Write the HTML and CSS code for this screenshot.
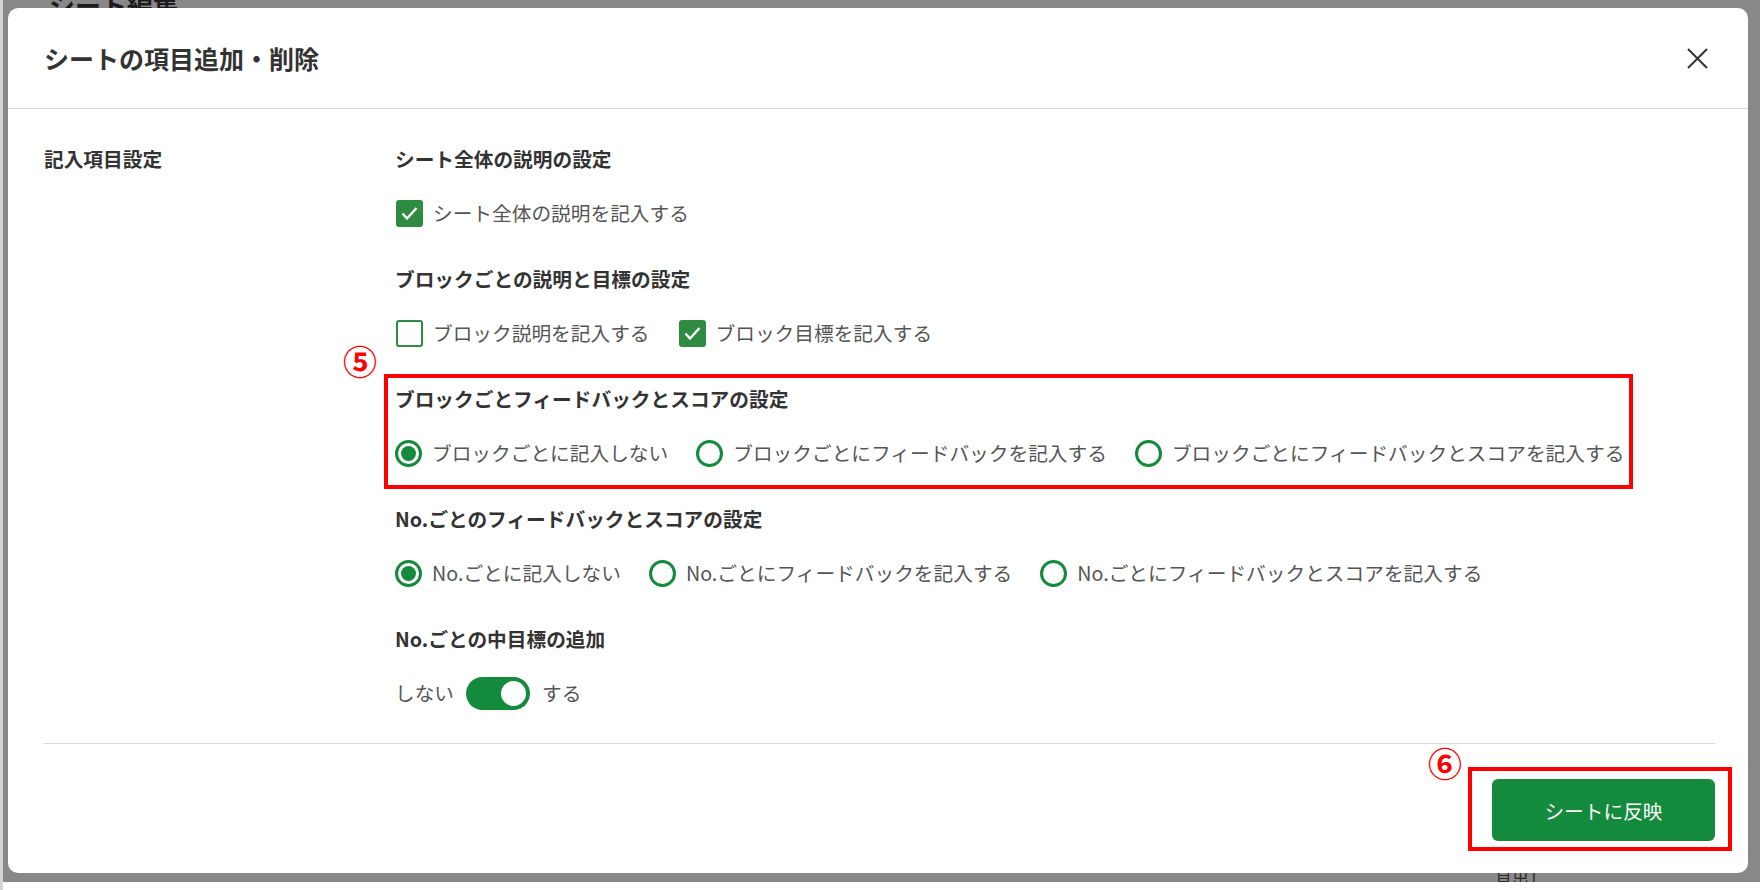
FILE: index.html
```html
<!DOCTYPE html>
<html lang="ja">
  <head>
    <meta charset="UTF-8" />
    <meta name="viewport" content="width=device-width, initial-scale=1.0" />
    <title>シートの項目追加・削除</title>
    <link rel="stylesheet" href="styles.css">
  </head>
  <body>
    <div class="screen">
      <div class="backdrop">
        <p class="bg-title">シート編集</p>
        <p class="bg-note">見出し</p>

        <div class="modal">
          <div class="modal-header">
            <h1>シートの項目追加・削除</h1>
            <button class="close" type="button" aria-label="閉じる">
              <svg width="21" height="21" viewBox="0 0 21 21">
                <path d="M1 1 L20 20 M20 1 L1 20" stroke="#333" stroke-width="2" fill="none" />
              </svg>
            </button>
          </div>

          <div class="modal-body">
            <div class="side-label">記入項目設定</div>
            <div class="groups">
              <div class="group">
                <h2>シート全体の説明の設定</h2>
                <div class="options">
                  <label class="option"><span class="box checked"><svg width="27" height="27" viewBox="0 0 27 27"><path d="M6.5 13.5 L11 18.5 L20.5 8" stroke="#fff" stroke-width="2.4" fill="none" /></svg></span>シート全体の説明を記入する</label>
                </div>
              </div>

              <div class="group">
                <h2>ブロックごとの説明と目標の設定</h2>
                <div class="options">
                  <label class="option"><span class="box"></span>ブロック説明を記入する</label>
                  <label class="option"><span class="box checked"><svg width="27" height="27" viewBox="0 0 27 27"><path d="M6.5 13.5 L11 18.5 L20.5 8" stroke="#fff" stroke-width="2.4" fill="none" /></svg></span>ブロック目標を記入する</label>
                </div>
              </div>

              <div class="mark mark-block">
                <span class="num num-5">⑤</span>
                <div class="group">
                  <h2>ブロックごとフィードバックとスコアの設定</h2>
                  <div class="options">
                    <label class="option"><span class="radio on"></span>ブロックごとに記入しない</label>
                    <label class="option"><span class="radio"></span>ブロックごとにフィードバックを記入する</label>
                    <label class="option"><span class="radio"></span>ブロックごとにフィードバックとスコアを記入する</label>
                  </div>
                </div>
              </div>

              <div class="group">
                <h2>No.ごとのフィードバックとスコアの設定</h2>
                <div class="options">
                  <label class="option"><span class="radio on"></span>No.ごとに記入しない</label>
                  <label class="option"><span class="radio"></span>No.ごとにフィードバックを記入する</label>
                  <label class="option"><span class="radio"></span>No.ごとにフィードバックとスコアを記入する</label>
                </div>
              </div>

              <div class="group">
                <h2>No.ごとの中目標の追加</h2>
                <div class="options toggle-row">
                  <span class="option">しない</span>
                  <span class="toggle"><span class="knob"></span></span>
                  <span class="option">する</span>
                </div>
              </div>
            </div>
          </div>

          <div class="modal-footer">
            <div class="mark mark-button">
              <span class="num num-6">⑥</span>
              <button class="apply" type="button">シートに反映</button>
            </div>
          </div>
        </div>
      </div>
    </div>
  </body>
</html>
```

FILE: styles.css
```css
body {
  margin: 0;
  padding: 0;
  background-color: #fff;
  font-family: "Noto Sans CJK JP", "Noto Sans", sans-serif;
  color: #333;
}

.screen {
  height: 890px;
  border-left: 3px solid #d4d4d4;
}

/* page behind the dialog, dimmed by the overlay */
.backdrop {
  position: relative;
  height: 882px;
  background-color: #888;
  overflow: hidden;
}

.bg-title {
  position: absolute;
  left: 46px;
  top: -14px;
  margin: 0;
  font-size: 26px;
  font-weight: bold;
  color: #1c1c1c;
}

.bg-note {
  position: absolute;
  left: 1492px;
  top: 866px;
  margin: 0;
  font-size: 17px;
  color: #2a2a2a;
}

.modal {
  position: absolute;
  left: 5px;
  top: 8px;
  width: 1740px;
  height: 865px;
  background-color: #fff;
  border-radius: 10px;
  display: flex;
  flex-direction: column;
  box-sizing: border-box;
}

.modal-header {
  height: 100px;
  flex-shrink: 0;
  display: flex;
  align-items: center;
  justify-content: space-between;
  padding: 0 40px 0 36px;
  border-bottom: 1px solid #dcdcdc;
}

.modal-header h1 {
  margin: 0;
  font-size: 25px;
  font-weight: bold;
  color: #333;
}

.close {
  border: none;
  background: none;
  padding: 0;
  width: 21px;
  height: 21px;
  cursor: pointer;
}

.close svg {
  display: block;
}

.modal-body {
  flex: 1;
  display: grid;
  grid-template-columns: 351px 1fr;
  padding: 36px 33px 0 36px;
}

.side-label {
  font-size: 19.7px;
  font-weight: bold;
  line-height: 28px;
  color: #333;
}

.groups {
  display: flex;
  flex-direction: column;
  gap: 36px;
}

.group h2 {
  margin: 0 0 24px;
  font-size: 19.7px;
  font-weight: bold;
  line-height: 28px;
  color: #333;
}

.options {
  display: flex;
  align-items: center;
  gap: 28px;
  height: 32px;
}

.option {
  display: flex;
  align-items: center;
  gap: 10px;
  font-size: 19.7px;
  line-height: 32px;
  color: #555;
  white-space: nowrap;
}

.box {
  width: 27px;
  height: 27px;
  margin-left: 1px;
  box-sizing: border-box;
  border: 2px solid #2e8b3f;
  border-radius: 3px;
  background-color: #fff;
}

.box.checked {
  background-color: #2e8b3f;
  border: none;
}

.box svg {
  display: block;
}

.radio {
  width: 27px;
  height: 27px;
  box-sizing: border-box;
  border: 3px solid #138a3c;
  border-radius: 50%;
  background-color: #fff;
  position: relative;
}

.radio.on::after {
  content: "";
  position: absolute;
  left: 3px;
  top: 3px;
  width: 15px;
  height: 15px;
  border-radius: 50%;
  background-color: #138a3c;
}

.toggle-row {
  gap: 12px;
}

.toggle {
  width: 64px;
  height: 33px;
  border-radius: 17px;
  background-color: #138a3c;
  display: flex;
  align-items: center;
  justify-content: flex-end;
  padding: 0 4px;
  box-sizing: border-box;
}

.knob {
  width: 25px;
  height: 25px;
  border-radius: 50%;
  background-color: #fff;
}

.modal-footer {
  flex-shrink: 0;
  margin: 0 33px 0 35px;
  padding: 35px 0 32px;
  border-top: 1px solid #dcdcdc;
  display: flex;
  justify-content: flex-end;
}

.apply {
  width: 223px;
  height: 62px;
  border: none;
  border-radius: 6px;
  background-color: #138a3c;
  color: #fff;
  font-family: inherit;
  font-size: 19.7px;
  cursor: pointer;
}

/* red annotation frames */
.mark {
  position: relative;
  border: 4px solid #f00;
  box-sizing: border-box;
}

.mark-block {
  width: 1249px;
  padding: 7px 0 16px 7px;
  margin: -11px 0 -20px -11px;
}

.mark-button {
  padding: 8px 13px 6px 20px;
  margin: -12px -17px -10px -24px;
}

.num {
  position: absolute;
  font-size: 34px;
  line-height: 34px;
  font-weight: bold;
  color: #f00;
}

.num-5 {
  left: -45px;
  top: -34px;
}

.num-6 {
  left: -44px;
  top: -25px;
}
```
